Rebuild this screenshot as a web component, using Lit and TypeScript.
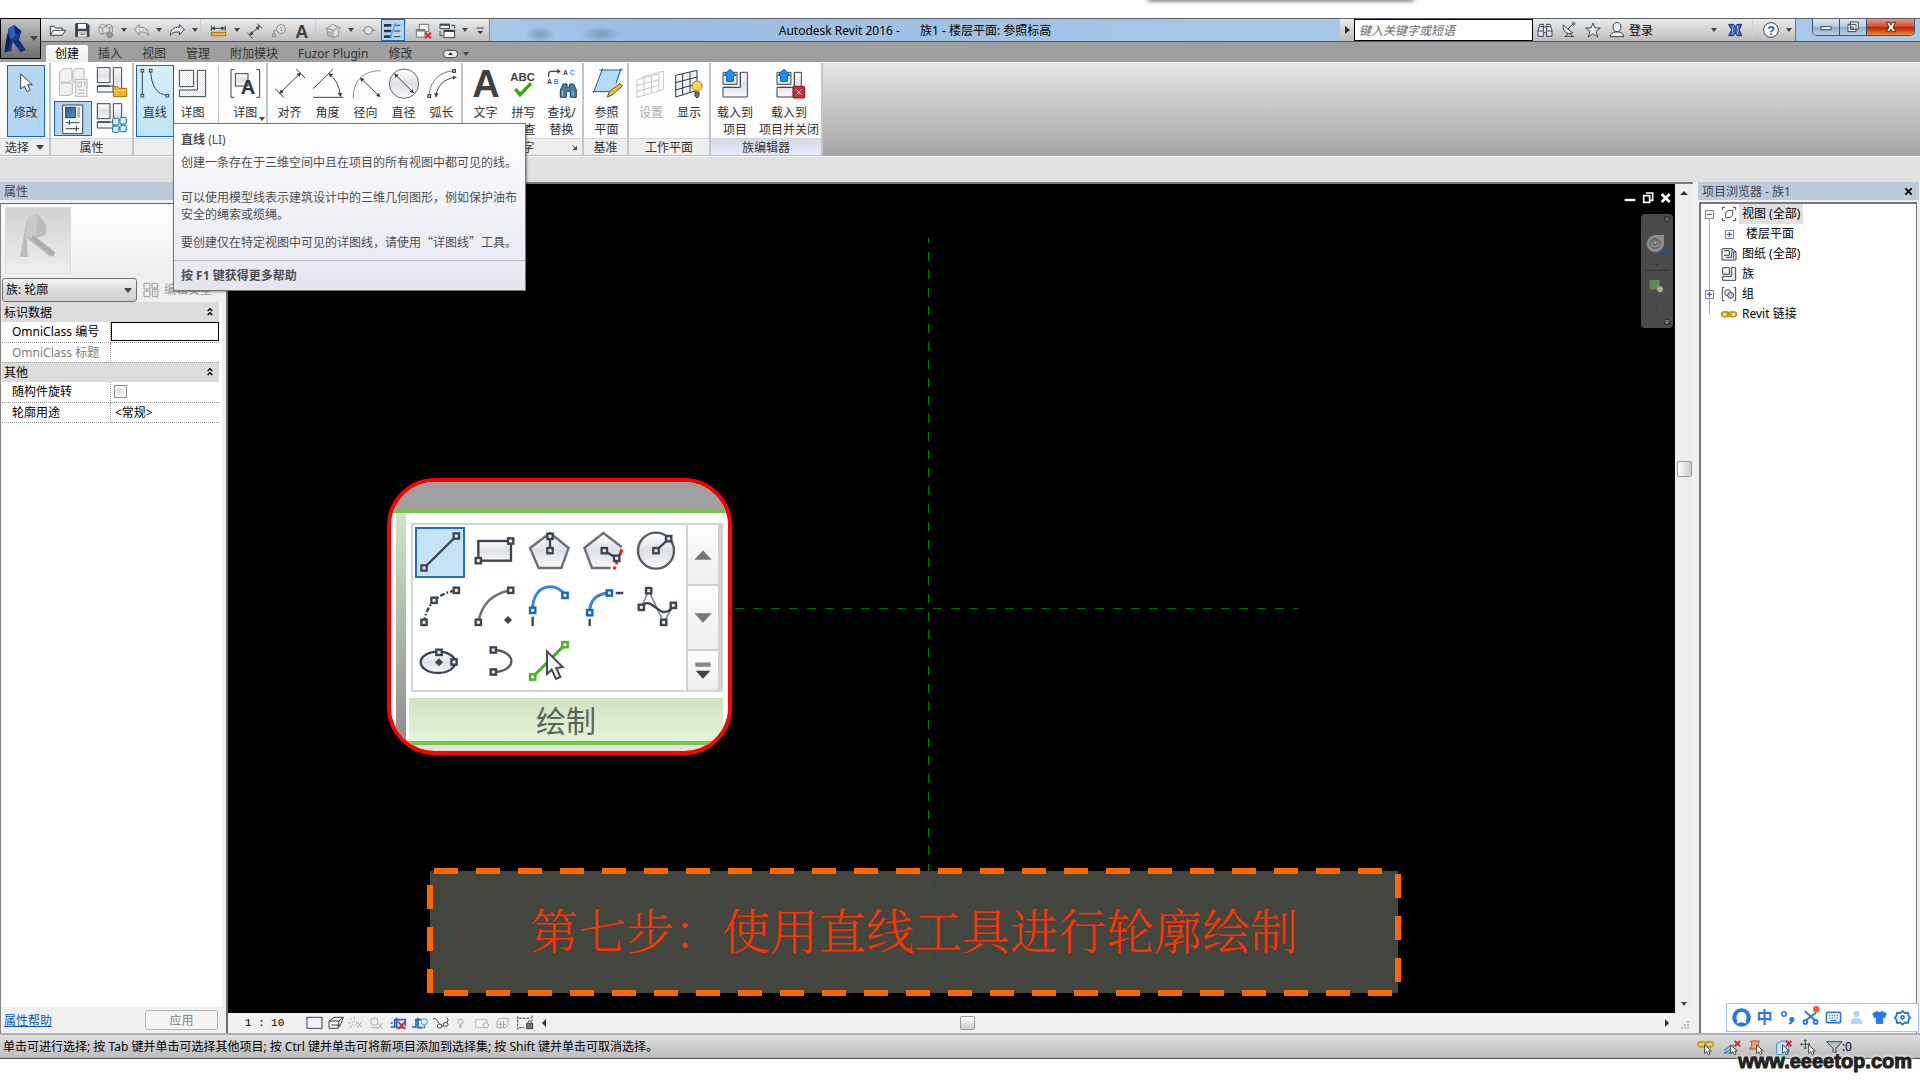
import { LitElement, html, svg, css, nothing, TemplateResult, SVGTemplateResult } from "lit";
import { customElement, state } from "lit/decorators.js";
import { classMap } from "lit/directives/class-map.js";

type Art = SVGTemplateResult;

/** Icon art is drawn on a grid of three units to one CSS pixel. */
const icon = (x: number, y: number, w: number, h: number, body: Art) => html`
  <svg class="art" width=${w / 3} height=${h / 3} viewBox="${x} ${y} ${w} ${h}" aria-hidden="true">${body}</svg>`;

const node = (x: number, y: number, c = "#3b4450", r = 6) =>
  svg`<rect x=${x - r} y=${y - r} width=${r * 2} height=${r * 2} fill="#e8edf2" stroke=${c} stroke-width=${r > 5 ? 7 : 3}></rect>`;

const arrows = (d: string) => svg`<path d=${d} marker-start="url(#tip)" marker-end="url(#tip)"></path>`;

const caret = html`<svg class="art" width="8" height="5" viewBox="0 0 8 5" aria-hidden="true"><path d="M0 0h8l-4 5z" fill="#444" stroke="none"></path></svg>`;
const smallCaret = html`<svg class="art" width="6" height="4" viewBox="0 0 6 4" aria-hidden="true"><path d="M0 0h6l-3 4z" fill="#444" stroke="none"></path></svg>`;

/* ---------- quick access toolbar ---------- */
const qat = {
  open: icon(138, 54, 72, 69, svg`<path d="M151 103V76h12l4 5h20v7M151 103l9-15h37l-11 15z" fill="#f4f6f8"></path>`),
  save: icon(210, 54, 72, 69, svg`<path d="M227 68h35l5 5v34h-40z" fill="#3b4450"></path><path d="M234 69h24v14h-24zM234 91h26v16h-26z" fill="#f4f6f8" stroke="none"></path><path d="M238 96h18M238 101h18" stroke-width="2"></path>`),
  sync: icon(282, 54, 72, 69, svg`<g stroke="#8d8d8d" fill="#dcdcdc"><path d="M297 78l10-9 11 5 9-5 10 7v17l-10 6-10-4-11 5-9-6zM297 78l10 4 11-6M318 76l10 5 9-5M308 82v18M328 81v14"></path><circle cx="329" cy="101" r="9" fill="#9a9a9a"></circle></g>`),
  undo: icon(387, 54, 72, 69, svg`<path d="M403 85l14-14v8c17-2 28 6 28 24-6-9-14-11-28-10v9z" stroke="#8b8b8b" fill="#dcdcdc"></path>`),
  redo: icon(495, 54, 72, 69, svg`<path d="M553 85l-15-14v8c-17-2-27 6-27 24 6-9 13-11 27-10v9z" fill="#e8edf2"></path>`),
  measure: icon(627, 54, 72, 69, svg`<path d="M640 74v16M682 74v16"></path>${arrows("M643 82H679")}<rect x="640" y="94" width="43" height="10" fill="#fac62e" stroke="#a6720c"></rect><path d="M648 95v5M656 95v5M664 95v5M672 95v5" stroke="#a6720c" stroke-width="2"></path>`),
  dim: icon(735, 54, 72, 69, svg`${arrows("M757 101L783 77")}<path d="M748 95l15 17M777 68l16 14"></path>`),
  tag: icon(807, 54, 72, 69, svg`<g stroke="#8b8b8b"><circle cx="849" cy="84" r="13" fill="#e0e0e0"></circle><path d="M836 88h-8v11M823 99h9v8h-9z"></path></g><text x="845" y="90" font-size="16" fill="#777">1</text>`),
  text: icon(879, 54, 72, 69, svg`<text x="892" y="110" font-size="54" font-weight="bold" fill="#3f3f3f">A</text>`),
  house: icon(969, 54, 72, 69, svg`<path d="M984 84l20-14 23 11-5 4v18l-17 7-17-8V87zM1005 110V88l16-8M1005 88l-18-6M993 104V92l6 2v12" stroke="#8d8d8d" fill="#dedede"></path>`),
  section: icon(1077, 54, 72, 69, svg`<path d="M1092 88h8M1123 88h9" stroke="#888"></path><path d="M1105 74l27 14-27 14z" fill="#888" stroke="none"></path><circle cx="1111" cy="88" r="12" fill="#e4e4e4" stroke="#888"></circle>`),
  thin: icon(1152, 57, 72, 63, svg`<path d="M1161 73h22M1161 90h22M1161 107h22" stroke-width="8" stroke="#2c3542"></path><path d="M1190 73h20M1190 90h20M1190 107h20" stroke="#2c3542"></path><path d="M1196 66l-17 46" stroke="#4fa2f0" stroke-width="4"></path>`),
  closeHidden: icon(1245, 54, 72, 69, svg`<g fill="#f4f4f4" stroke="#777"><rect x="1267" y="70" width="28" height="22"></rect><rect x="1258" y="86" width="26" height="22"></rect></g><path d="M1258 89h26" stroke="#777" stroke-width="5"></path><path d="M1284 95l18 17M1302 95l-18 17" stroke="#d6262a" stroke-width="6"></path>`),
  windows: icon(1317, 54, 72, 69, svg`<g fill="#f4f4f4"><rect x="1329" y="70" width="28" height="13"></rect><rect x="1341" y="88" width="32" height="22"></rect></g><path d="M1329 71h28M1341 90h32" stroke-width="6"></path><path d="M1329 90v14h8M1363 73h10v9"></path>`),
  more: icon(1416, 54, 54, 69, svg`<path d="M1433 81h22"></path><path d="M1435 90h18l-9 10z" fill="#3b4450" stroke="none"></path>`),
};

/* ---------- ribbon ---------- */
const familyBoxes = svg`<g fill="url(#steel)"><rect x="292" y="203" width="38" height="45"></rect><path d="M340 203h25v73h-73v-18h48z"></path><path d="M340 258v18M292 258h38" stroke-width="4"></path></g>`;
const loadBoxes = svg`<g fill="url(#steel)"><path d="M665 217h42v36h-42zM717 217h21v74h-73v-29h52z"></path><path d="M717 262v-45M665 262h42"></path></g><path d="M686 208l19 18h-9v18h-20v-18h-9z" fill="#1e90ff" stroke="#0a5ba8"></path>`;
const art = {
  modify: icon(30, 201, 96, 96, svg`<path d="M62 222v45l11-9 8 17 10-5-8-16h14z" fill="#fff"></path>`),
  typeProps: icon(168, 201, 99, 96, svg`<g stroke="#b7b7b7" fill="#f1f1f1"><path d="M176 216l10-10h27v33l-9 8h-28zM216 216l9-10h24v30l-6 10h-27zM176 254l8-5h30v33l-10 4h-28z"></path><rect x="224" y="238" width="34" height="51"></rect><path d="M231 246h10v14h-10zM248 246h4v14M231 270h20M231 280h20"></path></g>`),
  familyTypes: icon(288, 201, 96, 96, svg`${familyBoxes}<path d="M340 290v-30h13l4 5h23v25z" fill="#f0b51d" stroke="#a6700c"></path><path d="M342 271h36" stroke="#ffe08a"></path>`),
  props: icon(168, 306, 99, 96, svg`<path d="M185 312h60v86h-60z" fill="#f7f9fb"></path><rect x="194" y="319" width="29" height="31" fill="url(#blue)" stroke="#163e66"></rect><path d="M233 318v32" stroke="#a5adb5" stroke-width="7"></path><path d="M194 365h41M194 383h41M205 357v16M226 375v16"></path>`),
  categories: icon(288, 201, 96, 96, svg`${familyBoxes}<g fill="#d5efff" stroke="#1173ae"><rect x="338" y="247" width="19" height="20" rx="4"></rect><rect x="360" y="244" width="19" height="20" rx="4"></rect><rect x="338" y="270" width="19" height="19" rx="4"></rect><rect x="360" y="268" width="19" height="19" rx="4"></rect></g>`),
  line: icon(417, 201, 96, 96, svg`<path d="M427 213v73M452 213c2 44 18 71 50 73"></path>${node(427, 212, "#3b4450", 4)}${node(427, 287, "#3b4450", 4)}${node(452, 212, "#3b4450", 4)}${node(502, 287, "#3b4450", 4)}`),
  detail: icon(531, 201, 96, 96, svg`<path d="M538 211h43v49h-43zM592 211h25v79h-79v-20h54z" fill="url(#hatch)"></path>`),
  detailGroup: icon(682, 201, 96, 96, svg`<path d="M698 209h-10v83h10M764 209h10v83h-10"></path><rect x="701" y="221" width="38" height="37" fill="url(#steel)"></rect><text x="717" y="283" font-size="60" font-weight="bold" fill="#2c3542" stroke="#fff" stroke-width="3" paint-order="stroke">A</text>`),
  aligned: icon(819, 201, 96, 96, svg`<path d="M823 266l26 27M886 207l26 27"></path>${arrows("M837 279L898 220")}`),
  angular: icon(932, 201, 96, 96, svg`<path d="M936 266l60-59M936 292h90"></path>${arrows("M984 222Q1014 245 1017 288")}`),
  radial: icon(1050, 201, 96, 96, svg`<path d="M1060 294c-2-50 30-82 82-82" stroke="#888"></path>${arrows("M1082 235L1139 289")}`),
  diameter: icon(1163, 201, 96, 96, svg`<circle cx="1211" cy="251" r="44" fill="url(#steel)" stroke="#666"></circle>${arrows("M1184 223L1238 277")}`),
  arcLength: icon(1276, 201, 96, 96, svg`<path d="M1286 288c0-44 32-75 74-75" stroke="#777"></path>${arrows("M1306 289c3-32 25-54 59-57")}${node(1360, 213, "#222", 4)}${node(1286, 288, "#222", 4)}`),
  text: icon(1410, 201, 96, 96, svg`<text x="1417" y="292" font-size="114" font-weight="bold" fill="#3f3f3f">A</text>`),
  spell: icon(27, 201, 96, 96, svg`<text x="34" y="243" font-size="34" font-weight="bold" fill="#3f3f3f">ABC</text><path d="M49 267l14 17 33-34" stroke="#35a80d" stroke-width="10"></path>`),
  find: icon(138, 201, 96, 96, svg`<path d="M146 230v-8q0-8 8-8h22" stroke-width="4"></path><path d="M172 206l10 8-10 8z" fill="#3b4450" stroke="none"></path><g font-size="20" font-weight="bold"><text x="189" y="225" fill="#3f3f3f">A</text><text x="209" y="225" fill="#1e90ff">C</text><text x="141" y="252" fill="#3f3f3f">A</text><text x="161" y="252" fill="#1e90ff">B</text></g><path d="M181 292v-22l8-18h12v10h8v-10h12l8 18v22h-18v-18h-12v18z" fill="#4d7ba5" stroke="#1d3e5c"></path><path d="M187 272v18M219 272v18" stroke="#a9cbe8"></path>`),
  plane: icon(273, 201, 96, 96, svg`<path d="M306 211h58l-20 64h-61z" fill="#b4dcf0" stroke="none"></path><path d="M298 210h71M278 275h56M308 205l-28 74M363 205l-15 45" stroke="#1a5c9c" stroke-width="3"></path><path d="M322 291l6-16 32-25 7 8-31 27z" fill="#f7b733" stroke="#754b14"></path>`),
  setPlane: icon(403, 201, 96, 96, svg`<path d="M409 239l66-17v51l-66 19zM409 256l66-17M409 274l66-18M430 234v52M452 228v51M424 231l64-18v55l-13 5" stroke="#c6c6c6"></path>`),
  showPlane: icon(519, 201, 96, 96, svg`<path d="M527 226l64-15v60l-64 20zM527 248l64-17M527 270l64-19M548 222v64M570 217v60" fill="#eef2f5" stroke="#2f3845"></path><circle cx="591" cy="258" r="15" fill="#ffd84a" stroke="#b07c0c"></circle><path d="M585 276h12v12l-6 6-6-6z" fill="#66727e"></path>`),
  load: icon(653, 201, 96, 96, loadBoxes),
  loadClose: icon(653, 201, 96, 96, svg`${loadBoxes}<rect x="713" y="259" width="35" height="35" rx="3" fill="#d22a2c" stroke="#8d1111"></rect><path d="M723 269l15 15M738 269l-15 15" stroke="#fff"></path>`),
};

/* ---------- enlarged draw gallery ---------- */
const cell = (c: number, r: number, body: Art) => icon(130 + c * 162, 195 + r * 165, 162, 165, svg`<g stroke-width="7">${body}</g>`);
const drawTools: { name: string; art: TemplateResult }[] = [
  { name: "线", art: cell(0, 0, svg`<path d="M163 324l97-96"></path>${node(163, 324, "#3b4450", 8)}${node(260, 228, "#3b4450", 8)}`) },
  { name: "矩形", art: cell(1, 0, svg`<rect x="326" y="243" width="98" height="59" fill="url(#steel)"></rect>${node(326, 302, "#3b4450", 8)}${node(423, 243, "#3b4450", 8)}`) },
  { name: "内接多边形", art: cell(2, 0, svg`<path d="M541 219l56 45-22 60h-68l-26-60z" fill="url(#steel)" stroke="#697077"></path><path d="M541 230v42"></path>${node(541, 229, "#3b4450", 8)}${node(541, 272, "#3b4450", 8)}`) },
  { name: "外接多边形", art: cell(3, 0, svg`<path d="M701 219l56 42-24 63h-66l-23-60z" fill="url(#steel)" stroke="none"></path><path d="M756 261l-55-42-57 45 23 60h56" stroke="#697077"></path><path d="M757 268l-24 60" stroke="#ff1616" stroke-width="9" stroke-dasharray="20 8"></path><path d="M704 272l37 23"></path>${node(704, 272, "#3b4450", 8)}${node(741, 295, "#3b4450", 8)}`) },
  { name: "圆形", art: cell(4, 0, svg`<circle cx="859" cy="272" r="54" fill="url(#steel)" stroke="#555c64"></circle><path d="M859 272l38-35"></path>${node(859, 272, "#3b4450", 8)}${node(897, 236, "#3b4450", 8)}`) },
  { name: "起点-终点-半径弧", art: cell(0, 1, svg`<path d="M163 487q4-36 30-66 30-24 67-30" stroke-dasharray="15 6 5 6"></path>${node(163, 487, "#3b4450", 8)}${node(193, 421, "#3b4450", 8)}${node(260, 391, "#3b4450", 8)}`) },
  { name: "圆心-端点弧", art: cell(1, 1, svg`<path d="M326 487q14-82 97-96" stroke="#697077"></path>${node(326, 487, "#3b4450", 8)}${node(423, 391, "#3b4450", 8)}<path d="M415 468l12 12-12 12-12-12z" fill="#3b4450" stroke="none"></path>`) },
  { name: "相切-端点弧", art: cell(2, 1, svg`<path d="M489 450c-2-78 72-88 97-44" stroke="#3986d3" stroke-width="9"></path><path d="M489 470v28"></path>${node(489, 451, "#0d68bd", 8)}${node(586, 406, "#0d68bd", 8)}`) },
  { name: "圆角弧", art: cell(3, 1, svg`<path d="M660 458q0-56 59-59" stroke="#3986d3" stroke-width="9"></path><path d="M660 477v21M738 399h23"></path>${node(660, 458, "#0d68bd", 8)}${node(719, 399, "#0d68bd", 8)}`) },
  { name: "样条曲线", art: cell(4, 1, svg`<path d="M815 442l22-50 45 95 29-51" stroke="#85898e" stroke-width="5"></path><path d="M815 442c20-35 50 15 67 14s20-6 29-20"></path>${node(815, 442, "#3b4450", 8)}${node(837, 392, "#3b4450", 8)}${node(882, 487, "#3b4450", 8)}${node(911, 436, "#3b4450", 8)}`) },
  { name: "椭圆", art: cell(0, 2, svg`<ellipse cx="205" cy="607" rx="52" ry="32" fill="url(#steel)"></ellipse>${node(208, 577, "#3b4450", 8)}${node(253, 606, "#3b4450", 8)}<path d="M208 595l12 12-12 12-12-12z" fill="#3b4450" stroke="none"></path>`) },
  { name: "半椭圆", art: cell(1, 2, svg`<path d="M371 570c72 2 72 65 0 66" stroke="#555c64"></path>${node(371, 570, "#3b4450", 8)}${node(371, 636, "#3b4450", 8)}`) },
  { name: "拾取线", art: cell(2, 2, svg`<path d="M489 651l97-97" stroke="#3fb521" stroke-width="9"></path>${node(489, 651, "#3fb521", 8)}${node(586, 554, "#3fb521", 8)}<path d="M532 574v68l14-13 13 28 13-6-12-27 19-3z" fill="#f1f5f8" stroke="#444b53" stroke-width="6"></path>`) },
];

/* ---------- view control bar ---------- */
const viewTools: { name: string; art: TemplateResult }[] = [
  { name: "详细程度", art: icon(316, 42, 60, 48, svg`<rect x="322" y="49" width="45" height="33" fill="#eef2f9"></rect>`) },
  { name: "视觉样式", art: icon(379, 42, 60, 48, svg`<path d="M388 60l15-11h28l-7 20-9 13h-27zM388 60h30l13-11M418 60l-3 22M395 72h26" fill="#f4f4f4"></path>`) },
  { name: "日光路径", art: icon(442, 42, 60, 48, svg`<g stroke="#aaa"><circle cx="464" cy="66" r="7" stroke-dasharray="4 3"></circle><path d="M464 49v6M446 66h6M451 53l5 5M451 80l5-5M472 62l15 18M487 62l-15 18"></path></g>`) },
  { name: "阴影", art: icon(508, 42, 60, 48, svg`<g stroke="#aaa"><circle cx="527" cy="62" r="11"></circle><path d="M518 80h20M536 66l16 18M552 66l-16 18"></path></g>`) },
  { name: "裁剪视图", art: icon(565, 42, 60, 48, svg`<path d="M570 78h12V56h32v18M570 66h6M588 50v30h20" stroke="#1569b8" stroke-width="5"></path><path d="M592 62l22 22M614 62l-22 22" stroke="#e02e2e" stroke-width="6"></path>`) },
  { name: "显示裁剪区域", art: icon(628, 42, 60, 48, svg`<path d="M634 78h12V56h16M652 50v30h14" stroke="#1569b8" stroke-width="5"></path><circle cx="671" cy="62" r="9" fill="#eaf5ff" stroke="#3492dd"></circle><path d="M671 72v10" stroke="#3492dd" stroke-width="5"></path>`) },
  { name: "临时隐藏", art: icon(691, 42, 60, 48, svg`<path d="M697 54q8-5 12 4l7 10M722 76l12-4M738 50q7 5 2 14"></path><ellipse cx="717" cy="75" rx="7" ry="6" fill="#fff"></ellipse><ellipse cx="735" cy="70" rx="7" ry="6" fill="#fff"></ellipse>`) },
  { name: "显示隐藏图元", art: icon(757, 42, 60, 48, svg`<circle cx="782" cy="62" r="8" stroke="#aaa"></circle><path d="M782 71v11" stroke="#aaa" stroke-width="5"></path>`) },
  { name: "临时视图属性", art: icon(817, 42, 60, 48, svg`<g stroke="#aaa"><path d="M825 56h34v24h-34z" stroke-dasharray="6 3"></path><circle cx="856" cy="73" r="8" fill="#eee"></circle></g>`) },
  { name: "分析模型", art: icon(877, 42, 60, 48, svg`<path d="M886 60l9-8h24v18l-8 10h-25zM886 70h26M896 60v20M905 60v20" stroke="#aaa"></path>`) },
  { name: "约束", art: icon(940, 42, 60, 48, svg`<path d="M948 46v40M991 44v16M952 52h34M952 80h16" stroke-dasharray="8 3"></path><rect x="975" y="68" width="18" height="15" fill="#777"></rect><path d="M979 68v-6q5-6 10 0v6"></path>`) },
];

const pointer = svg`<path d="M32 24v25l6-5 5 9 5-2-4-9h8z" fill="#fff"></path>`;
const statusTools: { name: string; art: TemplateResult }[] = [
  { name: "选择链接", art: icon(0, 0, 78, 60, svg`<g stroke="#d49a10" stroke-width="6"><ellipse cx="24" cy="22" rx="12" ry="8"></ellipse><ellipse cx="46" cy="22" rx="12" ry="8"></ellipse></g>${pointer}`) },
  { name: "选择底图图元", art: icon(0, 0, 78, 60, svg`<path d="M12 40l20-14h16M12 48l20-12h16M12 48h28" stroke="#1b78c2"></path><path d="M44 12l16 16M60 12l-16 16" stroke="#d62828" stroke-width="6"></path>${pointer}`) },
  { name: "选择锁定图元", art: icon(0, 0, 78, 60, svg`<path d="M14 12h26l-3 7v9l7 8H10l7-8v-9z" fill="#ff9b63" stroke="#b8501b"></path>${pointer}`) },
  { name: "按面选择图元", art: icon(0, 0, 78, 60, svg`<path d="M14 20l14-8h22v34l-12 7H14z" fill="#bfe6fb" stroke="#3c93c2"></path><path d="M42 12l16 16M58 12l-16 16" stroke="#d62828" stroke-width="6"></path>${pointer}`) },
  { name: "选择时拖曳图元", art: icon(0, 0, 78, 60, svg`<path d="M22 8v28M8 22h28M18 12l4-4 4 4M18 32l4 4 4-4M12 18l-4 4 4 4M32 18l4 4-4 4"></path>${pointer}`) },
  { name: "过滤器", art: icon(0, 0, 54, 60, svg`<path d="M8 14h46L36 34v14l-9-4V34z" fill="#b8c2cc"></path>`) },
];

/* ---------- input method bar ---------- */
const imeTools: { name: string; art: TemplateResult }[] = [
  { name: "输入法", art: icon(0, 0, 72, 72, svg`<circle cx="36" cy="36" r="29" fill="#2878e6" stroke="none"></circle><path d="M36 18c-20 1-20 30-6 32h12c14-2 14-31-6-32z" fill="#fff" stroke="none"></path><path d="M22 52q14-9 28 0" stroke="#fff" stroke-width="6"></path>`) },
  { name: "中", art: html`<span class="ime-word">中</span>` },
  { name: "标点", art: icon(0, 0, 72, 72, svg`<circle cx="25" cy="25" r="7" stroke="#2878e6" stroke-width="5"></circle><path d="M44 44a6 6 0 1 1 8 4q-3 7-12 8 7-3 7-8z" fill="#2878e6" stroke="#2878e6" stroke-width="4"></path>`) },
  { name: "截图", art: icon(0, 0, 72, 72, svg`<g stroke="#2878e6" stroke-width="6"><path d="M18 16l34 30M54 20L20 46"></path><circle cx="20" cy="50" r="6"></circle><circle cx="52" cy="50" r="6"></circle></g><circle cx="54" cy="10" r="10" fill="#ff5533" stroke="none"></circle>`) },
  { name: "软键盘", art: icon(0, 0, 72, 72, svg`<rect x="14" y="20" width="44" height="32" rx="3" stroke="#2878e6" stroke-width="5"></rect><path d="M22 30h30M22 37h30" stroke="#2878e6" stroke-width="4" stroke-dasharray="4 4"></path><path d="M27 45h18" stroke="#2878e6" stroke-width="4"></path>`) },
  { name: "用户", art: icon(0, 0, 72, 72, svg`<g fill="#b8d2f7" stroke="none"><circle cx="36" cy="25" r="10"></circle><path d="M18 56q0-19 18-19t18 19z"></path></g>`) },
  { name: "皮肤", art: icon(0, 0, 72, 72, svg`<path d="M28 17q8 7 16 0l13 7-5 13-6-2v20H26V35l-6 2-5-13z" fill="#2878e6" stroke="#2878e6"></path>`) },
  { name: "设置", art: icon(0, 0, 72, 72, svg`<path d="M36 16l7 6 10-1 2 10 5 6-5 6-2 10-10-1-7 6-7-6-10 1-2-10-5-6 5-6 2-10 10 1z" stroke="#2878e6" stroke-width="6"></path><circle cx="36" cy="36" r="5" stroke="#2878e6" stroke-width="5"></circle>`) },
];

/* ---------- project tree ---------- */
interface TreeRow { text: string; open?: boolean; branch?: boolean; child?: boolean; selected?: boolean; art?: TemplateResult }
const tree: TreeRow[] = [
  { text: "视图 (全部)", branch: true, open: true, selected: true, art: icon(0, 0, 48, 48, svg`<path d="M12 4H4v8M36 4h8v8M4 36v8h8M44 36v8h-8"></path><path d="M14 20l8-7h13v14l-8 8H14z"></path>`) },
  { text: "楼层平面", branch: true, child: true },
  { text: "图纸 (全部)", art: icon(0, 0, 48, 48, svg`<path d="M3 8h30l12 10v24H3z" fill="#eef1f4"></path><path d="M9 14h16v14H9M15 34h17V20M38 20v18M33 8v10h12"></path>`) },
  { text: "族", art: icon(0, 0, 48, 48, svg`<path d="M5 5h20v20H5zM31 5h13v38H5V31h26z" fill="url(#steel)"></path>`) },
  { text: "组", branch: true, art: icon(0, 0, 48, 48, svg`<path d="M10 4H4v40h6M38 4h6v40h-6"></path><circle cx="20" cy="20" r="9"></circle><circle cx="29" cy="28" r="9" fill="#c9d1d8"></circle>`) },
  { text: "Revit 链接", art: icon(0, 0, 48, 48, svg`<g stroke="#d09510" stroke-width="6"><ellipse cx="13" cy="25" rx="11" ry="7"></ellipse><ellipse cx="35" cy="25" rx="11" ry="7"></ellipse><path d="M14 25h20"></path></g>`) },
];

@customElement("app-root")
export class AppRoot extends LitElement {
  @state() private tab = "创建";
  @state() private tool = "线";

  static styles = css`
    :host { display: block; color: #000; font: 12px/17px "Noto Sans", "Noto Sans CJK SC", sans-serif; }
    * { box-sizing: border-box; }
    button, input, select { font: inherit; color: inherit; margin: 0; padding: 0; border: 0; background: none; border-radius: 0; }
    button { display: flex; align-items: center; justify-content: center; white-space: nowrap; }
    p { margin: 0; }
    .defs { position: absolute; width: 0; height: 0; }
    .art { display: block; flex: none; overflow: visible; fill: none; stroke: #3b4450; stroke-width: 3; }
    .art text { stroke: none; font-family: "Liberation Sans", sans-serif; }
    .page { position: relative; display: flex; flex-direction: column; min-height: 100vh; padding: 18px 0 21px; background: #fff; overflow: hidden; }
    .page-shade { position: absolute; top: -4px; left: 1148px; width: 266px; height: 4px; box-shadow: 0 1px 4px #555; }

    /* title bar and tabs */
    .head { display: grid; grid-template-columns: 41px 1fr; grid-template-rows: 24px 20px; background: #9f9f9f; }
    .app-button { grid-row: 1 / 3; height: 41px; gap: 2px; border: 1px solid #000; background: linear-gradient(#c3c3c3, #6d6d6d); }
    .title-bar { display: flex; border-top: 1px solid #59636d; border-bottom: 1px solid #4c5661; background: radial-gradient(ellipse 15px 8px at 499px 15px, #5c789488, transparent), radial-gradient(ellipse 20px 8px at 560px 15px, #5c789488, transparent), linear-gradient(90deg, #a9c8e8 450px, #9dbde0 600px, #a8c6e6 1200px, #a9c9ea); }
    .quick { display: flex; width: 449px; padding-left: 5px; border-right: 1px solid #7c8a97; background: linear-gradient(#ededed, #bdbdbd); }
    .quick .tool { width: 24px; }
    .drop { width: 12px; }
    .quick .more { width: 18px; }
    .quick .on { border: 1px solid #1a69bd; background: #b5d7f3; }
    .rule { width: 7px; border-left: 1px solid #ccc; }
    .caption { flex: 1; display: flex; align-items: center; justify-content: center; gap: 20px; }
    .info { display: flex; align-items: center; width: 456px; border-right: 1px solid #777; background: linear-gradient(#ebebeb, #bcbcbc); }
    .info .fold { width: 14px; }
    .info input { width: 179px; height: 22px; padding: 0 4px; border: 1px solid #000; background: #fff; }
    .info input::placeholder { color: #666; font-style: italic; opacity: 1; }
    .info .tool { width: 24px; height: 22px; }
    .info .apps { width: 30px; }
    .info .rule { height: 20px; margin-left: 2px; }
    .sign-in { flex: 1; justify-content: flex-start; }
    .window-keys { display: flex; height: 17px; margin: 0 5px 0 16px; border: 1px solid #425568; border-top: 0; border-radius: 0 0 5px 5px; overflow: hidden; }
    .window-keys button { width: 27px; border-right: 1px solid #425568; background: linear-gradient(#dbe7f3, #b4c8dc 50%, #93acc6 51%, #b9d0e4); }
    .window-keys .close { width: 47px; border: 0; background: linear-gradient(#e99885, #d24a2c 50%, #b81d05 51%, #ee8b2e); }
    .tabs { display: flex; align-items: flex-end; padding-left: 5px; }
    .tabs button { height: 17px; padding: 0 10px; color: #333; }
    .tabs .on { padding: 0 9px; border-radius: 2px 2px 0 0; color: #000; background: linear-gradient(#fff, #ececec); }
    .tabs .collapse { gap: 5px; padding: 0 21px; }

    /* ribbon */
    .ribbon { display: flex; border-top: 1px solid #fff; border-bottom: 1px solid #fff; background: linear-gradient(#e6e6e6, #a4a4a4); }
    .panel { display: flex; flex-direction: column; border-right: 2px solid #c4c4c4; background: #fff; }
    .panel-body { display: flex; justify-content: center; height: 75px; padding: 2px 0 0 2px; background: linear-gradient(#fff, #fbfbfb); }
    .panel-title { display: flex; align-items: center; justify-content: center; gap: 7px; height: 18px; border-top: 1px solid #d5d5d5; border-bottom: 1px solid #bbb; color: #333; background: #eee; }
    .lilac .panel-title { background: linear-gradient(#d5daea, #e6eafa); }
    .lilac .panel-body { padding-left: 0; }
    .w-select { width: 51px; } .w-props { width: 83px; } .w-draw { width: 134px; } .w-dim { width: 195px; }
    .w-text { width: 121px; } .w-datum { width: 45px; } .w-plane { width: 82px; } .w-family { width: 112px; }
    .w-draw .panel-body { justify-content: flex-start; }
    .split { width: 8px; border-right: 1px solid #c4c4c4; margin-right: 5px; }
    .big { position: relative; flex-direction: column; justify-content: flex-start; width: 38px; height: 72px; padding-top: 1px; border: 1px solid transparent; color: #333; }
    .big .label { margin-top: 5px; text-align: center; }
    .big.on { border-color: #1568b8; background: #b5d6f3; }
    .big.hot { border-color: #1568b8; background: linear-gradient(#d5effb, #bfe4f6); }
    .big.off { color: #b0b0b0; }
    .big.menu { width: 42px; }
    .big.mid { width: 46px; }
    .big.long { width: 62px; }
    .corner { position: absolute; right: 0; top: 51px; }
    .pairs { display: grid; grid-template-columns: 38px 38px; grid-auto-rows: 35px; gap: 1px; }
    .pairs button { border: 1px solid transparent; }
    .pairs .on { border-color: #1568b8; background: #b5d6f3; }
    .text-title { position: relative; }
    .launch { position: absolute; right: 3px; top: 5px; }
    .options { height: 25px; background: #e0e1e3; }

    /* work area */
    .work { flex: 1; display: flex; background: #f0f0f0; }
    .dock-title { display: flex; align-items: center; justify-content: space-between; height: 18px; padding: 0 6px 0 4px; color: #3c4650; background: #bccbd9; }
    .props { display: flex; flex-direction: column; width: 228px; border-right: 2px solid #6e6e6e; }
    .props-body { flex: 1; display: flex; flex-direction: column; margin-top: 3px; padding-left: 1px; border-top: 1px solid #666; border-left: 1px solid #888; }
    .preview { display: flex; height: 73px; padding: 3px; background: linear-gradient(#fff, #eee); }
    .thumb { width: 66px; height: 67px; border: 1px solid #ddd; background: linear-gradient(#d2d2d2, #eee); }
    .type-row { display: flex; align-items: center; gap: 6px; height: 25px; }
    .type-row .pick { position: relative; width: 135px; }
    .type-row select { display: block; width: 135px; height: 24px; padding-left: 3px; border: 1px solid #707070; border-radius: 3px; appearance: none; background: linear-gradient(#f4f4f4, #ddd 50%, #cfcfcf); }
    .pick .art { position: absolute; right: 5px; top: 10px; pointer-events: none; }
    .edit-type { gap: 5px; color: #999; }
    .sheet { flex: 1; width: 220px; background: #fff; }
    .sheet table { width: 217px; border-collapse: collapse; table-layout: fixed; }
    .sheet th, .sheet td { height: 20px; padding: 0; border-bottom: 1px dotted #999; font-weight: normal; text-align: left; }
    .sheet .group { padding-left: 2px; border: 0; background: #dcdcdc; }
    .group-line { display: flex; align-items: center; justify-content: space-between; padding-right: 5px; }
    .sheet .name { width: 109px; padding-left: 10px; border-right: 1px dotted #999; }
    .sheet .dim { color: #808080; }
    .sheet input[type="text"] { display: block; width: 108px; height: 19px; padding: 0 3px; }
    .sheet .focus { outline: 1px solid #000; outline-offset: -1px; }
    .sheet input[type="checkbox"] { display: block; width: 13px; height: 13px; margin-left: 3px; appearance: none; border: 1px solid #8e8f8f; background: linear-gradient(135deg, #c8ccd2, #fff); box-shadow: inset 0 0 0 2px #f4f4f4; }
    .sheet .value { padding: 0 4px; }
    .props-foot { display: flex; align-items: center; justify-content: space-between; height: 26px; padding: 0 8px 0 2px; }
    .props-foot a { color: #0a5cc4; }
    .props-foot button { width: 73px; height: 20px; border: 1px solid #b5b5b5; border-radius: 3px; color: #838383; background: #f4f4f4; }

    .view { flex: 1; display: grid; grid-template-columns: 1fr 18px; grid-template-rows: 1fr 20px; margin-right: 5px; border-top: 2px solid #777; }
    .canvas { position: relative; background: #000; overflow: hidden; }
    .axes { position: absolute; left: 331px; top: 54px; }
    .mdi { position: absolute; top: 6px; right: 0; display: flex; }
    .mdi button { width: 18px; height: 16px; }
    .nav { position: absolute; top: 30px; right: 2px; display: flex; flex-direction: column; align-items: center; width: 32px; height: 114px; border-radius: 4px; background: #4a4a4a; }
    .v-scroll { display: flex; flex-direction: column; align-items: center; justify-content: space-between; padding: 6px 0; background: #eee; }
    .v-scroll button { width: 16px; height: 6px; }
    .v-scroll .v-thumb { width: 15px; height: 16px; margin-bottom: 259px; border: 1px solid #999; border-radius: 2px; background: linear-gradient(90deg, #fff, #ccc); }
    .v-gap { flex: 1; }
    .view-bar { display: flex; align-items: center; background: #f0f0f0; }
    .scale { width: 77px; padding-right: 4px; font: 11px/17px "Liberation Mono", monospace; white-space: pre; }
    .view-bar .tool { height: 18px; margin-right: 1px; }
    .h-scroll { flex: 1; display: flex; align-items: center; padding: 0 6px; height: 18px; }
    .h-scroll .h-thumb { width: 15px; height: 14px; border: 1px solid #999; border-radius: 2px; background: linear-gradient(#fff, #ccc); }
    .h-before { flex: 3; }
    .h-after { flex: 5; }
    .grip { display: flex; align-items: flex-end; justify-content: flex-end; padding: 3px; }

    .callout { position: absolute; left: 159px; top: 294px; width: 345px; height: 277px; border: 4px solid #f00; border-radius: 48px; overflow: hidden; background: #dfe5da; }
    .callout-strip { height: 28px; background: #a0a0a0; }
    .callout-main { display: flex; height: 235px; border-top: 3px solid #74c64a; border-bottom: 4px solid #74c64a; background: #fff; }
    .callout-edge { width: 10px; margin: 0 3px 0 5px; background: linear-gradient(#cfe4c6, #8e8e8e); }
    .callout-body { flex: 1; display: flex; flex-direction: column; justify-content: space-between; padding: 10px 5px 0 0; }
    .gallery { display: flex; margin-left: 2px; border: 2px solid #d4d4d6; }
    .tools { display: grid; grid-template-columns: repeat(5, 54px); grid-auto-rows: 55px; width: 273px; }
    .tools button { position: relative; }
    .tools .on::before { content: ""; position: absolute; inset: 2px; border: 2px solid #2271c9; background: #c5e3f5; }
    .tools .art { position: relative; }
    .steps { flex: 1; display: grid; grid-template-rows: 61px 65px 1fr; border-left: 2px solid #d0d0d4; border-right: 3px solid #d0d0d4; }
    .steps button { border-bottom: 2px solid #d0d0d4; background: linear-gradient(#fdfdfd, #eee); }
    .steps button:last-child { border: 0; }
    .callout-title { display: flex; align-items: center; justify-content: center; height: 43px; padding-top: 3px; font-size: 30px; line-height: 40px; color: #5a6458; background: linear-gradient(#cfe3c3, #e3f5d8); }

    .step { position: absolute; left: 199px; top: 684px; display: flex; align-items: center; justify-content: center; width: 974px; height: 128px; padding-bottom: 7px; }
    .step svg { position: absolute; inset: 0; }
    .step p { position: relative; font: 300 48px/64px "AR PL UMing CN", "Noto Serif CJK SC", "Noto Sans CJK SC", serif; color: #ff3300; white-space: nowrap; }

    .browser { display: flex; flex-direction: column; width: 222px; padding-right: 1px; }
    .tree { flex: 1; margin: 2px 2px 0 1px; padding: 0 0 0 4px; border: 1px solid #777; border-width: 2px 1px 0 2px; background: #fff; list-style: none; }
    .tree li { display: flex; align-items: center; height: 20px; padding-left: 16px; background: linear-gradient(90deg, #aaa 1px, transparent 1px) 4px 0 / 20px 100% no-repeat; }
    .tree li:first-child { background-position: 4px 10px; }
    .tree li:last-child { background-size: 20px 10px; }
    .tree .art { margin-right: 2px; }
    .tree .text { padding: 0 3px; line-height: 20px; }
    .tree .sel { background: #e0e0e0; }
    .tree .twig { width: 9px; height: 9px; margin-left: -16px; margin-right: 7px; border: 1px solid #888; background: #fff; color: #1846b0; }
    .tree .twig .art { margin: 0; }
    .tree .child { padding-left: 20px; }
    .tree .child .twig { margin-left: 0; margin-right: 8px; }
    .tree .child .text { padding: 0 4px; }

    /* status line */
    .status { display: flex; align-items: center; justify-content: space-between; height: 26px; padding: 0 68px 0 3px; border-top: 2px solid #b0b0b0; border-bottom: 1px solid #4a4f55; background: linear-gradient(#dedede, #bdbdbd); }
    .status-tools { display: flex; align-items: center; }
    .ime { position: absolute; right: 1px; bottom: 48px; display: flex; align-items: center; width: 193px; height: 29px; padding-left: 3px; border: 1px solid #a5c4f5; background: #fff; }
    .ime button { width: 23px; }
    .ime .art { width: 23px; height: 23px; }
    .ime-word { font-size: 16px; font-weight: bold; color: #2878e6; }
    .mark { position: absolute; right: 8px; bottom: 7px; font: bold 20px/24px Impact, "Liberation Sans", sans-serif; color: #222; -webkit-text-stroke: 1px #222; text-shadow: 0 0 3px #fff, 0 0 3px #fff, 0 0 4px #fff; }

    .tip { position: absolute; left: 173px; top: 123px; width: 353px; padding: 7px 0 0; border: 1px solid #767676; color: #4f4f4f; background: linear-gradient(#fff, #e4e5f0); box-shadow: 1px 1px 2px #0006; white-space: nowrap; }
    .tip p { padding: 0 7px; }
    .tip .lead { margin: 6px 0 18px; }
    .tip .last { margin-top: 10px; font-family: "Noto Sans CJK SC", sans-serif; }
    .tip .help { margin-top: 10px; padding: 6px 7px; border-top: 1px solid #bbb; font-weight: bold; }
  `;

  private quickTool(name: string, art: TemplateResult, drop = false, cls = "tool") {
    return html`<button class=${cls} aria-label=${name}>${art}</button>${drop
      ? html`<button class="drop" aria-label="${name}选项">${smallCaret}</button>` : nothing}`;
  }

  private big(a: TemplateResult, lines: string[], cls = "") {
    return html`<button class="big ${cls}">${a}<span class="label">${lines.map((l, i) => (i ? html`<br>${l}` : l))}</span>${cls === "menu"
      ? html`<span class="corner">${smallCaret}</span>` : nothing}</button>`;
  }

  private renderHead() {
    return html`
      <header class="head">
        <button class="app-button" aria-label="应用程序菜单">
          <svg class="art" width="24" height="30" viewBox="20 62 66 84" aria-hidden="true">
            <g stroke="none"><path d="M32 74l16-9 20 17-7 27-18 6-3 23-19 3z" fill="#1c3c8e"></path><path d="M32 74l16-9 4 28-14 14z" fill="#2d5fc0"></path><path d="M48 65l20 17-16 11z" fill="#12276a"></path><path d="M42 109l18-4 21 30-15 6z" fill="#17307c"></path><path d="M28 90l12 17-10 31-9 3z" fill="#0f1f58"></path></g>
          </svg>${caret}
        </button>
        <div class="title-bar">
          <div class="quick">
            ${this.quickTool("打开", qat.open)}${this.quickTool("保存", qat.save)}${this.quickTool("同步", qat.sync, true)}
            ${this.quickTool("放弃", qat.undo, true)}${this.quickTool("重做", qat.redo, true)}<span class="rule"></span>
            ${this.quickTool("测量", qat.measure, true)}${this.quickTool("尺寸标注", qat.dim)}${this.quickTool("标记", qat.tag)}${this.quickTool("文字", qat.text)}<span class="rule"></span>
            ${this.quickTool("三维视图", qat.house, true)}${this.quickTool("剖面", qat.section)}${this.quickTool("细线", qat.thin, false, "tool on")}<span class="rule"></span>
            ${this.quickTool("关闭隐藏窗口", qat.closeHidden)}${this.quickTool("切换窗口", qat.windows)}
            <button class="drop" aria-label="窗口列表">${smallCaret}</button>
            <button class="more" aria-label="自定义">${qat.more}</button>
          </div>
          <div class="caption"><span>Autodesk Revit 2016 -</span><span>族1 - 楼层平面: 参照标高</span></div>
          <div class="info">
            <button class="fold" aria-label="收起"><svg class="art" width="5" height="8" viewBox="0 0 5 8"><path d="M0 0v8l5-4z" fill="#333" stroke="none"></path></svg></button>
            <input type="text" aria-label="搜索" placeholder="键入关键字或短语">
            <button class="tool" aria-label="查找">${icon(0, 0, 54, 54, svg`<path d="M6 46V28l6-18h10v8h10v-8h10l6 18v18H32V34H22v12zM22 18v14M32 18v14" fill="#e9eef3"></path><path d="M6 30h16M32 30h16M12 17h10M32 17h10"></path>`)}</button>
            <button class="tool" aria-label="通讯中心">${icon(0, 0, 54, 54, svg`<path d="M10 12c-4 18 10 30 28 24zM24 24l16-16M14 46h28M24 36l-6 10M30 36l6 10" fill="#e9eef3"></path><circle cx="41" cy="8" r="4"></circle>`)}</button>
            <button class="tool" aria-label="收藏夹">${icon(0, 0, 54, 54, svg`<path d="M27 6l6 15h16L36 31l5 17-14-10-14 10 5-17L5 21h16z" fill="#e9eef3"></path>`)}</button>
            <button class="tool" aria-label="用户">${icon(0, 0, 54, 54, svg`<ellipse cx="27" cy="18" rx="12" ry="14" fill="#e9eef3"></ellipse><path d="M6 47q4-14 16-14h10q12 0 16 14z" fill="#e9eef3"></path>`)}</button>
            <button class="sign-in">登录</button>
            <button class="drop" aria-label="登录选项">${smallCaret}</button>
            <button class="tool apps" aria-label="Exchange Apps">${icon(0, 0, 54, 54, svg`<path d="M8 10h15l5 9 5-9h14l-7 17 7 17H33l-5-9-5 9H8l9-17z" fill="#3c62b4" stroke="#1b3478"></path><path d="M22 14l-3 13 3 13M34 14l3 13-3 13" stroke="#a6bff0"></path>`)}</button>
            <span class="rule"></span>
            <button class="tool" aria-label="帮助">${icon(0, 0, 60, 60, svg`<circle cx="30" cy="30" r="22" fill="#fff"></circle><text x="19" y="44" font-size="38" font-weight="bold" fill="#1c55b8">?</text>`)}</button>
            <button class="drop" aria-label="帮助选项">${smallCaret}</button>
          </div>
          <div class="window-keys">
            <button aria-label="最小化">${icon(0, 0, 36, 36, svg`<rect x="3" y="17" width="30" height="9" fill="#fff"></rect>`)}</button>
            <button aria-label="还原">${icon(0, 0, 36, 36, svg`<path d="M10 3h24v22H10zM3 10h24v22H3zM11 18h8v7h-8z" fill="#fff"></path>`)}</button>
            <button class="close" aria-label="关闭">${icon(0, 0, 36, 36, svg`<path d="M4 4h10l4 8 4-8h10l-8 14 8 14H22l-4-8-4 8H4l8-14z" fill="#fff" stroke="#5a2018"></path>`)}</button>
          </div>
        </div>
        <nav class="tabs">
          ${["创建", "插入", "视图", "管理", "附加模块", "Fuzor Plugin", "修改"].map((t) => html`
            <button class=${classMap({ on: t === this.tab })} @click=${() => (this.tab = t)}>${t}</button>`)}
          <button class="collapse" aria-label="最小化功能区">${icon(0, 0, 45, 30, svg`<rect x="2" y="4" width="41" height="22" rx="9" fill="#eee"></rect><path d="M15 18h15l-7-8z" fill="#222" stroke="none"></path>`)}${smallCaret}</button>
        </nav>
      </header>`;
  }

  private renderRibbon() {
    return html`
      <section class="ribbon" aria-label="功能区">
        <div class="panel w-select"><div class="panel-body">${this.big(art.modify, ["修改"], "on")}</div><div class="panel-title">选择 ${caret}</div></div>
        <div class="panel w-props"><div class="panel-body"><div class="pairs">
          <button aria-label="类型属性">${art.typeProps}</button><button aria-label="族类型">${art.familyTypes}</button>
          <button class="on" aria-label="属性">${art.props}</button><button aria-label="族类别">${art.categories}</button>
        </div></div><div class="panel-title">属性</div></div>
        <div class="panel w-draw"><div class="panel-body">${this.big(art.line, ["直线"], "hot")}${this.big(art.detail, ["详图"])}<span class="split"></span>${this.big(art.detailGroup, ["详图", "组"], "menu")}</div><div class="panel-title">详图</div></div>
        <div class="panel w-dim"><div class="panel-body">${this.big(art.aligned, ["对齐"])}${this.big(art.angular, ["角度"])}${this.big(art.radial, ["径向"])}${this.big(art.diameter, ["直径"])}${this.big(art.arcLength, ["弧长"])}</div><div class="panel-title">尺寸标注</div></div>
        <div class="panel w-text"><div class="panel-body">${this.big(art.text, ["文字"])}${this.big(art.spell, ["拼写", "检查"])}${this.big(art.find, ["查找/", "替换"])}</div>
          <div class="panel-title text-title">文字<button class="launch" aria-label="文字类型">${icon(0, 0, 24, 24, svg`<path d="M4 4l10 10"></path><path d="M18 5v13H5z" fill="#444" stroke="none"></path>`)}</button></div></div>
        <div class="panel w-datum"><div class="panel-body">${this.big(art.plane, ["参照", "平面"])}</div><div class="panel-title">基准</div></div>
        <div class="panel w-plane"><div class="panel-body">${this.big(art.setPlane, ["设置"], "off")}${this.big(art.showPlane, ["显示"])}</div><div class="panel-title">工作平面</div></div>
        <div class="panel w-family lilac"><div class="panel-body">${this.big(art.load, ["载入到", "项目"], "mid")}${this.big(art.loadClose, ["载入到", "项目并关闭"], "long")}</div><div class="panel-title">族编辑器</div></div>
      </section>
      <div class="options"></div>`;
  }

  private renderProps() {
    const chevrons = icon(0, 0, 24, 30, svg`<path d="M5 12l7-7 7 7M5 24l7-7 7 7" stroke="#000" stroke-width="4"></path>`);
    return html`
      <aside class="props">
        <div class="dock-title">属性</div>
        <div class="props-body">
          <div class="preview"><div class="thumb">
            <svg class="art" width="64" height="65" viewBox="15 110 192 195" aria-hidden="true"><g stroke="none"><path d="M78 140l31-15 28 38-4 27-29 12 52 39-8 16-71-58 4 58-24-1z" fill="#bcbcbc"></path><path d="M78 140l31-15-5 77-31-5z" fill="#c9c9c9"></path><path d="M96 190l66 53-5 14-66-54z" fill="#adadad"></path></g></svg>
          </div></div>
          <div class="type-row">
            <span class="pick"><select aria-label="类型选择器"><option>族: 轮廓</option></select>${caret}</span>
            <button class="edit-type" disabled>${icon(0, 0, 48, 48, svg`<path d="M3 4h18v17H3zM27 4h17v14H27zM3 27h18v17H3zM28 22h17v22H28zM33 28h7M33 36h7" stroke="#999"></path>`)}编辑类型</button>
          </div>
          <div class="sheet">
            <table>
              <tr><th class="group" colspan="2"><div class="group-line">标识数据${chevrons}</div></th></tr>
              <tr><th class="name"><label for="omni-no">OmniClass 编号</label></th><td><input class="focus" id="omni-no" type="text"></td></tr>
              <tr><th class="name dim"><label for="omni-title">OmniClass 标题</label></th><td><input id="omni-title" type="text" disabled></td></tr>
              <tr><th class="group" colspan="2"><div class="group-line">其他${chevrons}</div></th></tr>
              <tr><th class="name"><label for="rotate">随构件旋转</label></th><td><input id="rotate" type="checkbox"></td></tr>
              <tr><th class="name">轮廓用途</th><td><button class="value">&lt;常规&gt;</button></td></tr>
            </table>
          </div>
          <div class="props-foot"><a href="#help">属性帮助</a><button>应用</button></div>
        </div>
      </aside>`;
  }

  private renderView() {
    return html`
      <main class="view">
        <div class="canvas">
          <svg class="axes" width="742" height="742" viewBox="559 238 742 742" aria-hidden="true">
            <path d="M928.5 238v738" stroke="#007f00" stroke-dasharray="9 9" stroke-dashoffset="4"></path>
            <path d="M559 608.5h739" stroke="#006a00" stroke-dasharray="9 9" stroke-dashoffset="4"></path>
          </svg>
          <div class="mdi">
            <button aria-label="最小化视图">${icon(0, 0, 36, 36, svg`<path d="M2 24h32" stroke="#fff" stroke-width="7"></path>`)}</button>
            <button aria-label="还原视图">${icon(0, 0, 36, 36, svg`<path d="M12 3h20v22h-6M5 11h18v20H5z" stroke="#fff" stroke-width="5"></path>`)}</button>
            <button aria-label="关闭视图">${icon(0, 0, 36, 36, svg`<path d="M5 6l24 24M29 6L5 30" stroke="#fff" stroke-width="8"></path>`)}</button>
          </div>
          <div class="nav">${icon(1641, 0, 96, 342, svg`
            <circle cx="1719" cy="16" r="10" fill="#333" stroke="none"></circle><path d="M1715 12l8 8M1723 12l-8 8" stroke="#ccc" stroke-width="2"></path>
            <path d="M1684 63h26v26a26 26 0 1 1-26-26z" fill="#8c8c8f" stroke="none"></path><circle cx="1683" cy="88" r="15" stroke="#55585c"></circle><circle cx="1683" cy="85" r="8" stroke="#55585c"></circle>
            <text x="1692" y="124" font-size="24" font-weight="bold" fill="#2c4f7c">2D</text>
            <path d="M1650 169h78" stroke="#333"></path><path d="M1682 150h10l-5 5zM1682 275h10l-5 5z" fill="#333" stroke="none"></path>
            <path d="M1667 198h30v28h-30z" fill="#648a54" stroke="none"></path><circle cx="1698" cy="226" r="9" fill="#aaa" stroke="none"></circle><path d="M1704 233l10 8" stroke="#666"></path>
            <circle cx="1719" cy="324" r="10" fill="#333" stroke="none"></circle><path d="M1713 320h12M1715 325h8l-4 4z" stroke="#ccc" stroke-width="2"></path>`)}</div>
          ${this.renderCallout()}
          <div class="step">
            <svg width="974" height="128" aria-hidden="true">
              <rect x="3" y="3" width="968" height="122" fill="#484d44" fill-opacity=".91"></rect>
              <g stroke="#ff6600" stroke-width="6" stroke-dasharray="24 18"><path d="M7 3h948M17 125h948M3 17v108M971 6v108"></path></g>
            </svg>
            <p>第七步：使用直线工具进行轮廓绘制</p>
          </div>
        </div>
        <div class="v-scroll">
          <button aria-label="向上滚动"><svg class="art" width="8" height="4" viewBox="0 0 8 4"><path d="M0 4h8L4 0z" fill="#333" stroke="none"></path></svg></button>
          <span class="v-gap"></span><button class="v-thumb" aria-label="垂直滚动块"></button><span class="v-gap"></span>
          <button aria-label="向下滚动">${smallCaret}</button>
        </div>
        <div class="view-bar">
          <button class="scale">1 : 10</button>
          ${viewTools.map((t) => html`<button class="tool" aria-label=${t.name}>${t.art}</button>`)}
          <div class="h-scroll">
            <svg class="art" width="4" height="8" viewBox="0 0 4 8"><path d="M4 0v8L0 4z" fill="#333" stroke="none"></path></svg>
            <span class="h-before"></span><button class="h-thumb" aria-label="水平滚动块"></button><span class="h-after"></span>
            <svg class="art" width="4" height="8" viewBox="0 0 4 8"><path d="M0 0v8l4-4z" fill="#333" stroke="none"></path></svg>
          </div>
        </div>
        <div class="grip"><svg class="art" width="9" height="9" viewBox="0 0 9 9"><path d="M6 0h2v2H6zM3 3h2v2H3zM6 3h2v2H6zM0 6h2v2H0zM3 6h2v2H3zM6 6h2v2H6z" fill="#bbb" stroke="none"></path></svg></div>
      </main>`;
  }

  private renderCallout() {
    return html`
      <section class="callout">
        <div class="callout-strip"></div>
        <div class="callout-main">
          <div class="callout-edge"></div>
          <div class="callout-body">
            <div class="gallery">
              <div class="tools">${drawTools.map((t) => html`
                <button class=${classMap({ on: t.name === this.tool })} aria-label=${t.name} @click=${() => (this.tool = t.name)}>${t.art}</button>`)}</div>
              <div class="steps">
                <button aria-label="上一行">${icon(0, 0, 54, 30, svg`<path d="M1 29h52L27 1z" fill="#777" stroke="none"></path>`)}</button>
                <button aria-label="下一行">${icon(0, 0, 54, 30, svg`<path d="M1 1h52L27 29z" fill="#777" stroke="none"></path>`)}</button>
                <button aria-label="展开">${icon(0, 0, 48, 54, svg`<path d="M1 8h46" stroke="#888" stroke-width="13"></path><path d="M2 26h44L24 50z" fill="#444" stroke="none"></path>`)}</button>
              </div>
            </div>
            <div class="callout-title">绘制</div>
          </div>
        </div>
      </section>`;
  }

  private renderBrowser() {
    return html`
      <aside class="browser">
        <div class="dock-title">项目浏览器 - 族1<button aria-label="关闭浏览器">${icon(0, 0, 27, 27, svg`<path d="M4 4l19 19M23 4L4 23" stroke="#000" stroke-width="6"></path>`)}</button></div>
        <ul class="tree">${tree.map((r) => html`
          <li class=${classMap({ child: !!r.child })}>
            ${r.branch ? html`<button class="twig" aria-label="${r.text}展开">${icon(0, 0, 21, 21, svg`<path d=${r.open ? "M3 10h15" : "M3 10h15M10 3v15"} stroke="#1846b0"></path>`)}</button>` : nothing}
            ${r.art ?? nothing}<span class="text ${r.selected ? "sel" : ""}">${r.text}</span>
          </li>`)}</ul>
      </aside>`;
  }

  render() {
    return html`
      <svg class="defs" aria-hidden="true"><defs>
        <linearGradient id="steel" x1="0" y1="0" x2="0" y2="1"><stop offset="0" stop-color="#fff"></stop><stop offset=".5" stop-color="#dde0e6"></stop><stop offset="1" stop-color="#fafafa"></stop></linearGradient>
        <linearGradient id="blue" x1="0" y1="0" x2="1" y2="1"><stop offset="0" stop-color="#2d5d92"></stop><stop offset="1" stop-color="#4f97cc"></stop></linearGradient>
        <pattern id="hatch" width="6" height="6" patternUnits="userSpaceOnUse"><rect width="6" height="6" fill="#fff"></rect><path d="M0 0l6 6" stroke="#aab0b6" stroke-width="1"></path></pattern>
        <marker id="tip" viewBox="0 0 10 10" refX="7" refY="5" markerWidth="13" markerHeight="13" markerUnits="userSpaceOnUse" orient="auto-start-reverse"><path d="M0 0l10 5-10 5z" fill="#3b4450" stroke="none"></path></marker>
      </defs></svg>
      <div class="page">
        <div class="page-shade"></div>
        ${this.renderHead()}
        ${this.renderRibbon()}
        <div class="work">${this.renderProps()}${this.renderView()}${this.renderBrowser()}</div>
        <footer class="status">
          <span>单击可进行选择; 按 Tab 键并单击可选择其他项目; 按 Ctrl 键并单击可将新项目添加到选择集; 按 Shift 键并单击可取消选择。</span>
          <div class="status-tools">${statusTools.map((t) => html`<button aria-label=${t.name}>${t.art}</button>`)}<span>:0</span></div>
        </footer>
        <div class="tip" role="tooltip">
          <p><b>直线</b> (LI)</p>
          <p class="lead">创建一条存在于三维空间中且在项目的所有视图中都可见的线。</p>
          <p>可以使用模型线表示建筑设计中的三维几何图形，例如保护油布<br>安全的绳索或缆绳。</p>
          <p class="last">要创建仅在特定视图中可见的详图线，请使用“详图线”工具。</p>
          <p class="help">按 F1 键获得更多帮助</p>
        </div>
        <div class="ime">${imeTools.map((t) => html`<button aria-label=${t.name}>${t.art}</button>`)}</div>
        <div class="mark">www.eeeetop.com</div>
      </div>`;
  }
}
